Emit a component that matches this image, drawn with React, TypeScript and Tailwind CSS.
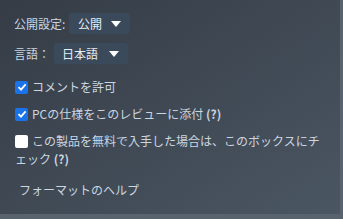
import React from "react";

function Caret() {
  return (
    <svg width="10" height="6" viewBox="0 0 10 6" className="ml-auto">
      <path d="M0 0 L10 0 L5 6 Z" fill="#ffffff" />
    </svg>
  );
}

function Check({ checked }: { checked: boolean }) {
  return checked ? (
    <span className="w-[13px] h-[13px] rounded-[2px] bg-[#1a73e8] flex items-center justify-center shrink-0">
      <svg width="10" height="10" viewBox="0 0 10 10">
        <path d="M1.5 5.2 L4 7.6 L8.6 2.4" stroke="#fff" strokeWidth="1.8" fill="none" />
      </svg>
    </span>
  ) : (
    <span className="block w-[13px] h-[13px] rounded-[2px] bg-white shrink-0" />
  );
}

export default function App() {
  return (
    <div
      className="w-[343px] h-[219px] bg-[#59636e] text-[#cbd6e0] text-[12px] leading-[16px]"
      style={{ fontFamily: '"Noto Sans CJK JP", "Liberation Sans", sans-serif' }}
    >
      <div className="w-[340px] h-[214px] bg-gradient-to-br from-[#353c46] to-[#4a5662] pt-[13px] pl-[14px]">
        <div className="flex items-center h-[21px]">
          <span className="w-[55px]">公開設定:</span>
          <div className="w-[61px] h-[21px] rounded-[3px] bg-[#3b4a5b] flex items-center pl-[9px] pr-[9px] text-[#e6eef5]">
            公開
            <Caret />
          </div>
        </div>
        <div className="flex items-center h-[21px] mt-[9px]">
          <span className="w-[40px]">言語：</span>
          <div className="w-[74px] h-[21px] rounded-[3px] bg-[#3b4a5b] flex items-center pl-[8px] pr-[9px] text-[#e6eef5]">
            日本語
            <Caret />
          </div>
        </div>
        <div className="flex items-center gap-[4px] mt-[15px] pl-[1px]">
          <Check checked />
          <span>コメントを許可</span>
        </div>
        <div className="flex items-center gap-[4px] mt-[11px] pl-[1px]">
          <Check checked />
          <span>
            PCの仕様をこのレビューに添付 <b>(?)</b>
          </span>
        </div>
        <div className="mt-[10px] pl-[1px] w-[310px] leading-[18px]">
          <span className="inline-block align-[-2px] mr-[4px]">
            <Check checked={false} />
          </span>
          この製品を無料で入手した場合は、このボックスにチェック <b>(?)</b>
        </div>
        <div className="mt-[14px] pl-[5px]">フォーマットのヘルプ</div>
      </div>
    </div>
  );
}
